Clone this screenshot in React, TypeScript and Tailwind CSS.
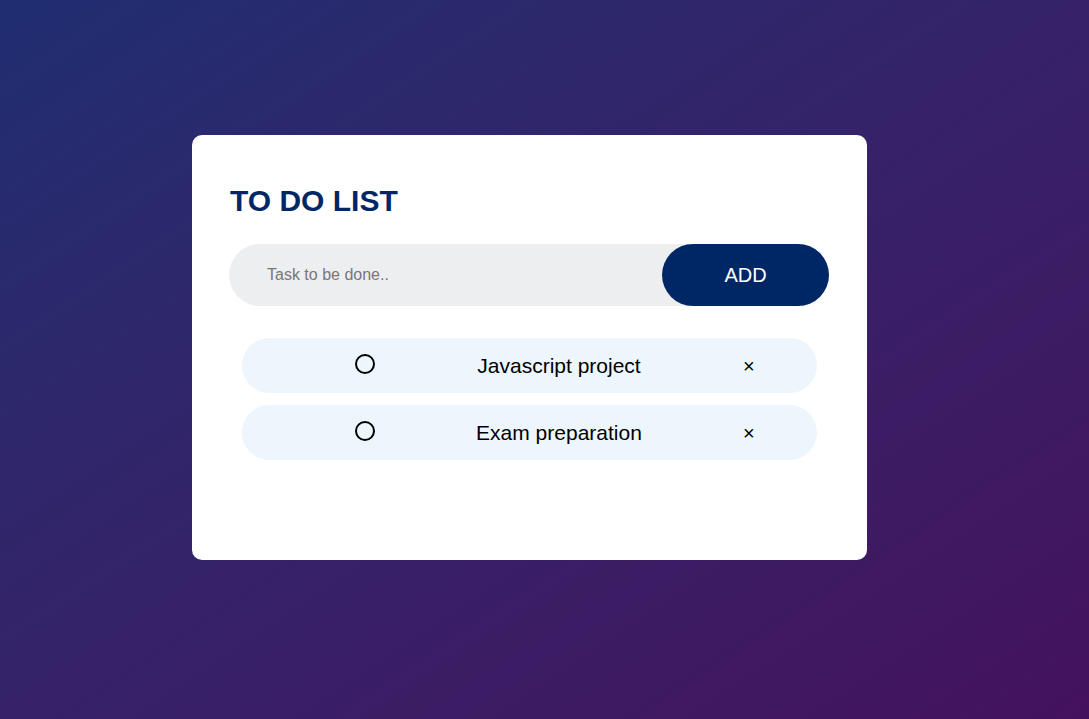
import React from "react";

const tasks = ["Javascript project", "Exam preparation"];

const App = () => {
  const renderTasks = tasks.map((task, index) => {
    return (
      <li
        key={index}
        className="flex items-center h-[55px] w-[575px] rounded-full bg-[#edf5fd] pl-[113px]"
      >
        <span className="block w-5 h-5 rounded-full border-2 border-black -mt-[4px]" />
        <span className="w-[368px] text-center text-[21px] text-black">
          {task}
        </span>
        <span className="text-[20px] leading-none text-black">×</span>
      </li>
    );
  });

  return (
    <div
      className="w-full h-[719px] overflow-hidden bg-gradient-to-br from-[#1f2e71] to-[#44115f] pt-[135px] pl-[192px]"
      style={{ fontFamily: '"Liberation Sans", Arial, sans-serif' }}
    >
      <div className="w-[675px] h-[425px] bg-white rounded-[10px] pt-[48px] px-[37px]">
        <h2 className="font-bold text-[30px] leading-[35px] text-[#002765] pl-[1px]">
          TO DO LIST
        </h2>
        <div className="flex items-center mt-[26px] h-[62px] w-[600px] rounded-full bg-[#edeef0]">
          <input
            type="text"
            placeholder="Task to be done.."
            className="flex-1 bg-transparent pl-[38px] text-[16px] text-black placeholder:text-[#777] outline-none"
          />
          <button className="h-[62px] w-[167px] rounded-full bg-[#002765] text-white text-[20px]">
            ADD
          </button>
        </div>
        <ul className="flex flex-col gap-[12px] mt-[32px] pl-[13px]">
          {renderTasks}
        </ul>
      </div>
    </div>
  );
};

export default App;
